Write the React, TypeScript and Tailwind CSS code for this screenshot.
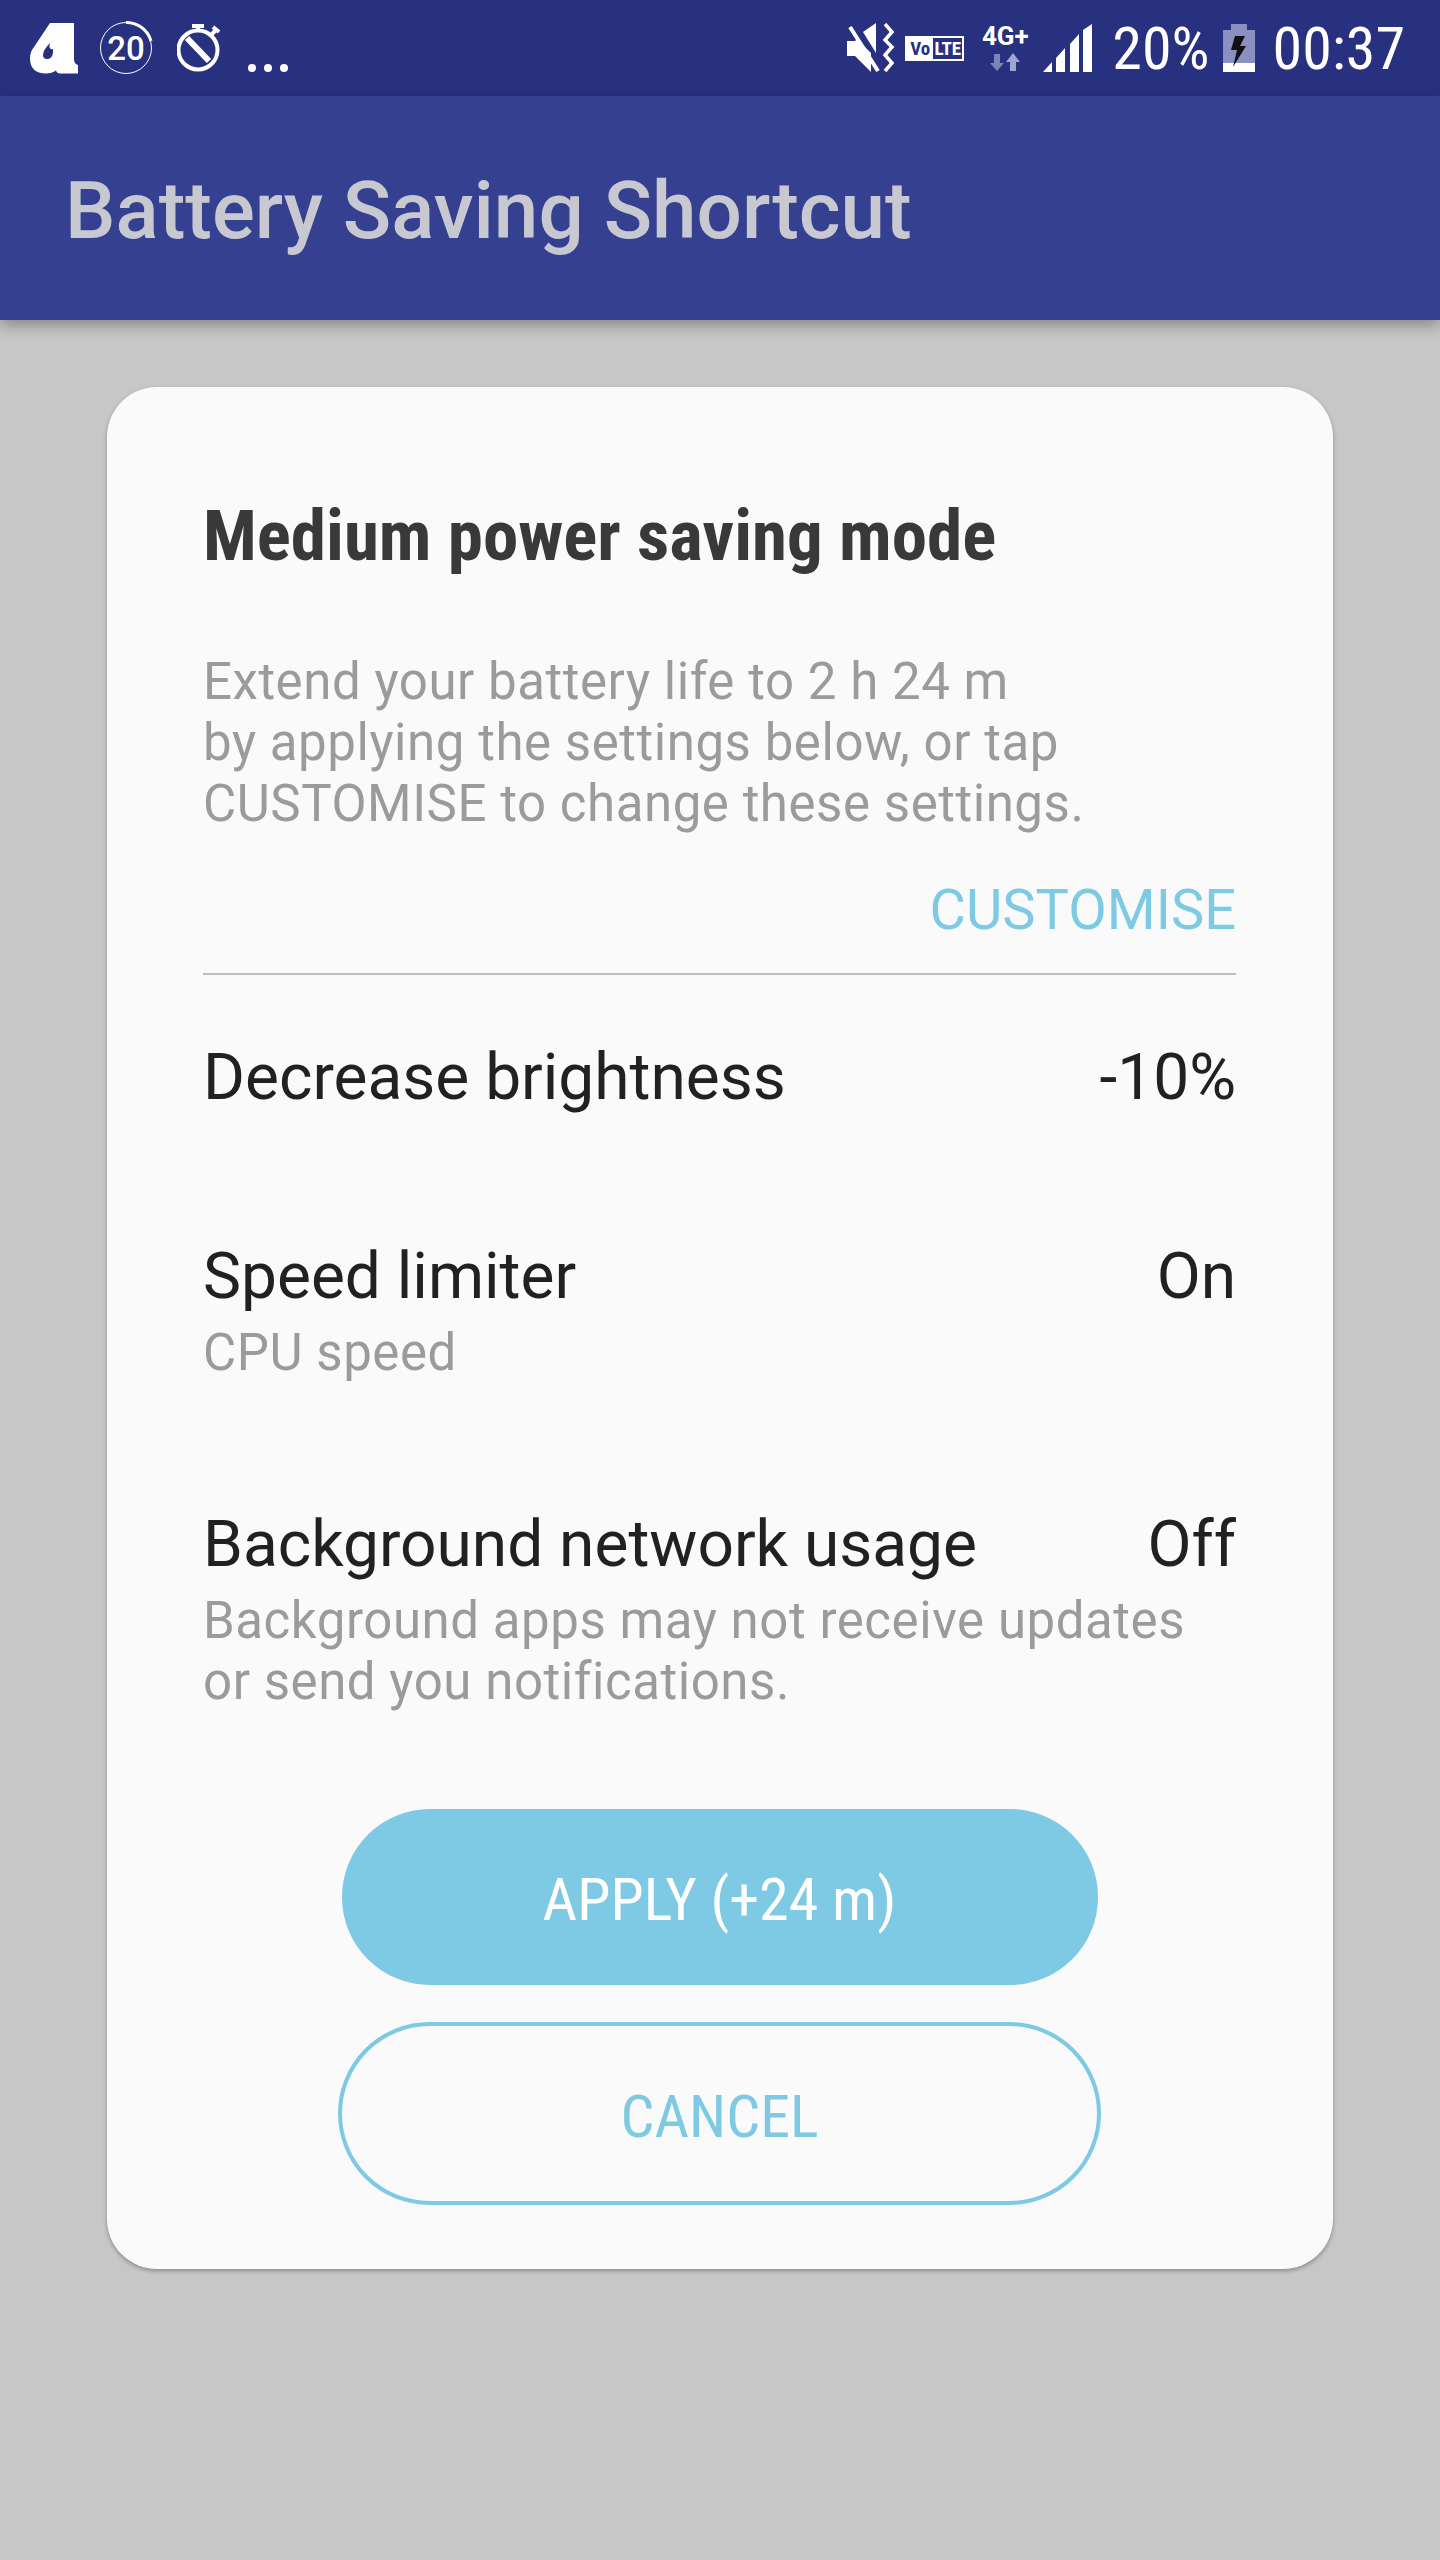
const font = "font-['Roboto','Liberation_Sans',sans-serif]";

function AppLogo() {
  return (
    <svg width="48" height="52" viewBox="0 0 48 52" className="text-white">
      <path
        fill="currentColor"
        fillRule="evenodd"
        d="M20 1h24v36q0 5 4 6v8.500H30q-3 0-4-3-4 3-10 3Q0 51.500 0 36q0-6 4-11ZM20 21q-7 7-7 12 0 4 4 4 5 0 6-6v-4q-5 1-3-6Z"
      />
    </svg>
  );
}

function DataSaver() {
  return (
    <svg width="54" height="54" viewBox="0 0 54 54">
      <circle cx="27" cy="27" r="25.500" fill="none" stroke="white" strokeWidth="1" />
      <path d="M27 1.500A25.500 25.500 0 0 1 52 20" fill="none" stroke="white" strokeWidth="3" />
      <text x="27" y="39" textAnchor="middle" fill="white" fontFamily="Roboto" fontWeight="500" fontSize="33">
        20
      </text>
    </svg>
  );
}

function TimerOff() {
  return (
    <svg width="46" height="50" viewBox="0 0 46 50">
      <circle cx="21" cy="26" r="19.500" fill="none" stroke="white" strokeWidth="4" />
      <path d="M15 2h12M21 2v5M33 12l5-5M36 3l6 5" stroke="white" strokeWidth="4" fill="none" />
      <path d="M10 14l22 23" stroke="white" strokeWidth="6" />
    </svg>
  );
}

function MuteVibrate() {
  return (
    <svg width="50" height="50" viewBox="0 0 50 50">
      <path d="M0 18h8l2-2 14 14v-1 20L8 33H0Z" fill="white" />
      <path d="M16 9 29 0v30Z" fill="white" />
      <path d="M3 4l28 44" stroke="white" strokeWidth="4" />
      <path d="M38 1l7 8-7 8 7 7-7 8 7 8-7 8" fill="none" stroke="white" strokeWidth="3.500" />
    </svg>
  );
}

function VoLte() {
  return (
    <div className="flex h-[25px] w-[59px] items-center bg-white p-[2px] text-[19px] leading-none font-bold">
      <span className="w-[26px] text-center text-[#27317f] [font-stretch:75%]">Vo</span>
      <span className="flex h-full flex-1 items-center justify-center bg-[#27317f] text-white [font-stretch:75%]">
        LTE
      </span>
    </div>
  );
}

function Network() {
  return (
    <div className="flex w-[50px] flex-col items-center">
      <span className="text-[26px] leading-[24px] font-bold text-white">4G+</span>
      <svg width="30" height="20" viewBox="0 0 30 20" className="mt-[4px]">
        <path d="M4 2h6v9h4l-7 8-7-8h4Z" fill="#7d84b8" />
        <path d="M20 19h6v-9h4l-7-9-7 9h4Z" fill="#a0a5cf" />
      </svg>
    </div>
  );
}

function Signal() {
  return (
    <svg width="49" height="48" viewBox="0 0 49 48">
      <path d="M0 48 9 38v10ZM13 48V34l9-10v24ZM27 48V20l9-10v38ZM40 48V6l9-6v48Z" fill="white" />
    </svg>
  );
}

function Battery() {
  return (
    <svg width="32" height="48" viewBox="0 0 32 48">
      <path d="M8 0h16v6h8v34H0V6h8Z" fill="#8a90c0" />
      <path d="M0 39h32v9H0Z" fill="white" />
      <path d="M12 12h10l-5 10h6L10 43l4-17H8Z" fill="#111" />
    </svg>
  );
}

function Row({
  label,
  value,
  sub,
  className,
}: {
  label: string;
  value: string;
  sub?: string[];
  className?: string;
}) {
  return (
    <div className={className}>
      <div className="flex items-center justify-between text-[64px] leading-[72px] text-[#212121]">
        <span>{label}</span>
        <span>{value}</span>
      </div>
      {sub && (
        <p className="mt-[9px] text-[51px] leading-[61px] tracking-[0.55px] text-[#9b9b9b]">
          {sub.map((line) => (
            <span key={line} className="block">
              {line}
            </span>
          ))}
        </p>
      )}
    </div>
  );
}

export default function App() {
  return (
    <div className={`flex h-[2560px] w-[1440px] flex-col bg-[#c7c7c7] ${font}`}>
      {/* Status bar */}
      <div className="flex h-[96px] items-center justify-between bg-[#27317f] pr-[35px] pl-[30px]">
        <div className="flex items-center">
          <AppLogo />
          <div className="ml-[21px]">
            <DataSaver />
          </div>
          <div className="mt-[2px] ml-[24px]">
            <TimerOff />
          </div>
          <div className="mt-[40px] ml-[25px] flex gap-[8px]">
            <span className="h-[8px] w-[8px] rounded-full bg-white" />
            <span className="h-[8px] w-[8px] rounded-full bg-white" />
            <span className="h-[8px] w-[8px] rounded-full bg-white" />
          </div>
        </div>
        <div className="flex items-center">
          <MuteVibrate />
          <div className="ml-[8px]">
            <VoLte />
          </div>
          <div className="ml-[16px]">
            <Network />
          </div>
          <div className="ml-[13px]">
            <Signal />
          </div>
          <span className="mt-[2px] ml-[20px] text-[60px] leading-none text-white [font-stretch:75%]">20%</span>
          <div className="ml-[13px]">
            <Battery />
          </div>
          <span className="mt-[2px] ml-[18px] text-[60px] leading-none text-white [font-stretch:75%]">00:37</span>
        </div>
      </div>

      {/* App bar */}
      <div className="flex h-[224px] items-center bg-[#354090] pt-[6px] pl-[65px] text-[80px] font-medium text-[#c7c8d0] shadow-[0_6px_14px_rgba(0,0,0,0.3)]">
        Battery Saving Shortcut
      </div>

      {/* Dialog card */}
      <div className="mx-auto mt-[67px] h-[1882px] w-[1226px] rounded-[50px] bg-[#fafafa] pt-[119px] pr-[97px] pl-[96px] shadow-[0_2px_4px_rgba(0,0,0,0.3)]">
        <h1 className="text-[71px] leading-[60px] font-bold text-[#393939] [font-stretch:75%]">
          Medium power saving mode
        </h1>
        <p className="mt-[85px] text-[51px] leading-[61px] tracking-[0.55px] text-[#9b9b9b]">
          <span className="block">Extend your battery life to 2 h 24 m</span>
          <span className="block">by applying the settings below, or tap</span>
          <span className="block">CUSTOMISE to change these settings.</span>
        </p>
        <div className="mt-[40px] text-right text-[56px] leading-[72px] text-[#7ec9e4]">CUSTOMISE</div>
        <div className="mt-[27px] h-[2px] bg-[#bdbdbd]" />
        <Row className="mt-[67px]" label="Decrease brightness" value="-10%" />
        <Row className="mt-[127px]" label="Speed limiter" value="On" sub={['CPU speed']} />
        <Row
          className="mt-[126px]"
          label="Background network usage"
          value="Off"
          sub={['Background apps may not receive updates', 'or send you notifications.']}
        />
        <div className="mt-[97px] flex flex-col items-center">
          <button className="h-[176px] w-[756px] rounded-[88px] bg-[#7ec9e4] pt-[6px] text-[60px] text-white [font-stretch:75%]">
            APPLY (+24 m)
          </button>
          <button className="mt-[37px] h-[183px] w-[763px] rounded-[92px] border-[4px] border-[#7ec9e4] pt-[6px] text-[60px] text-[#7ec9e4] [font-stretch:75%]">
            CANCEL
          </button>
        </div>
      </div>
    </div>
  );
}
